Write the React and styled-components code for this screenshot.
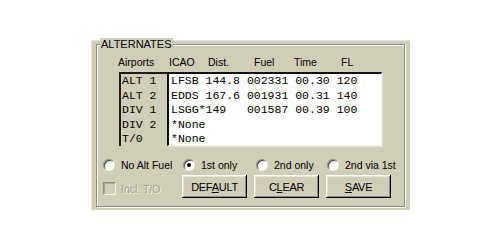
import React from 'react'
import styled, { createGlobalStyle } from 'styled-components'

const FACE = '#d0cdb9'
const SHADOW = '#8e8b7c'

const GlobalStyle = createGlobalStyle`
  html, body {
    margin: 0;
    background: #fff;
  }
  body {
    font-family: "Liberation Sans", Arial, sans-serif;
  }
`

const Page = styled.div`
  padding: 40px 0 0 91px;
`

const Panel = styled.div`
  width: 319px;
  height: 170px;
  box-sizing: border-box;
  padding: 4px 5px 3px 5px;
  background: ${FACE};
  box-shadow: inset 1px 1px 0 #e4e2d4;
`

const GroupBox = styled.div`
  position: relative;
  height: 100%;
  box-sizing: border-box;
  border: 1px solid ${SHADOW};
  box-shadow: inset 1px 1px 0 #fff, 1px 1px 0 #fff;
  padding: 10px 0 0 1px;
`

const Legend = styled.div`
  position: absolute;
  top: -7px;
  left: 3px;
  padding: 0 1px;
  background: ${FACE};
  font-size: 11px;
  line-height: 13px;
  color: #000;
`

const HeaderRow = styled.div`
  display: flex;
  padding-left: 20px;
  height: 14px;
  font-size: 10.5px;
  line-height: 14px;
  color: #000;
`

const HeadCell = styled.div`
  width: ${p => p.$w}px;
  flex: none;
`

const Table = styled.div`
  display: flex;
  margin: 3px 0 0 21px;
  height: 74px;
  font-family: "Liberation Mono", "Courier New", monospace;
  font-size: 11.5px;
  color: #000;
`

const LabelBox = styled.div`
  width: 48px;
  box-sizing: border-box;
  border-top: 2px solid #1c1c1c;
  border-left: 2px solid #1c1c1c;
  padding-left: 1px;
  background: ${FACE};
`

const ListBox = styled.div`
  width: 215px;
  box-sizing: border-box;
  border-top: 2px solid #111;
  border-left: 2px solid #111;
  border-right: 1px solid #f4f3ec;
  border-bottom: 1px solid #f4f3ec;
  box-shadow: 1px 1px 0 #e2e0d2;
  padding-left: 2px;
  background: #fff;
`

const Row = styled.div`
  height: 14.5px;
  line-height: 14.5px;
  white-space: pre;
`

const RadioRow = styled.div`
  display: grid;
  grid-template-columns: 80px 73px 71px auto;
  margin: 12px 0 0 5px;
  height: 14px;
  font-size: 10.5px;
  color: #000;
`

const RadioItem = styled.label`
  display: flex;
  align-items: center;
  gap: 6px;
`

const RadioCircle = styled.span`
  position: relative;
  width: 12px;
  height: 12px;
  box-sizing: border-box;
  border-radius: 50%;
  background: #fff;
  border: 1px solid;
  border-color: ${SHADOW} #f4f3ec #f4f3ec ${SHADOW};
  box-shadow: inset 1px 1px 0 #404040;
  flex: none;

  &::after {
    content: '';
    display: ${p => (p.$on ? 'block' : 'none')};
    position: absolute;
    left: 3px;
    top: 3px;
    width: 4px;
    height: 4px;
    border-radius: 50%;
    background: #000;
  }
`

const BottomRow = styled.div`
  display: flex;
  align-items: center;
  margin: 3px 0 0 5px;
  height: 23px;
`

const CheckGroup = styled.div`
  width: 79px;
  flex: none;
  display: flex;
  align-items: center;
  gap: 5px;
  font-size: 10.5px;
  color: #a3a091;
  text-shadow: 1px 1px 0 #f2f1e8;
  margin-top: 4px;
`

const CheckBox = styled.span`
  width: 13px;
  height: 13px;
  box-sizing: border-box;
  border: 1px solid;
  border-color: ${SHADOW} #f4f3ec #f4f3ec ${SHADOW};
  box-shadow: inset 1px 1px 0 #a9a696;
  background: ${FACE};
  flex: none;
`

const Buttons = styled.div`
  display: flex;
  gap: 7px;
`

const Button = styled.button`
  width: 65px;
  height: 23px;
  padding: 0;
  background: ${FACE};
  border: none;
  box-shadow:
    inset -1px -1px 0 #000,
    inset 1px 1px 0 #fff,
    inset -2px -2px 0 ${SHADOW},
    inset 2px 2px 0 #e6e4d8;
  font-family: "Liberation Sans", Arial, sans-serif;
  font-size: 11px;
  letter-spacing: -0.3px;
  color: #000;

  u {
    text-underline-offset: 1px;
  }
`

const headers = [
  ['Airports', 51],
  ['ICAO', 39],
  ['Dist.', 46],
  ['Fuel', 40],
  ['Time', 47],
  ['FL', 20],
]

const labels = ['ALT 1', 'ALT 2', 'DIV 1', 'DIV 2', 'T/0']

const entries = [
  'LFSB 144.8 002331 00.30 120',
  'EDDS 167.6 001931 00.31 140',
  'LSGG*149   001587 00.39 100',
  '*None',
  '*None',
]

const radios = [
  ['No Alt Fuel', false],
  ['1st only', true],
  ['2nd only', false],
  ['2nd via 1st', false],
]

export default function App() {
  return (
    <Page>
      <GlobalStyle />
      <Panel>
        <GroupBox>
          <Legend>ALTERNATES</Legend>
          <HeaderRow>
            {headers.map(([t, w]) => (
              <HeadCell key={t} $w={w}>{t}</HeadCell>
            ))}
          </HeaderRow>
          <Table>
            <LabelBox>
              {labels.map(l => <Row key={l}>{l}</Row>)}
            </LabelBox>
            <ListBox>
              {entries.map((e, i) => <Row key={i}>{e}</Row>)}
            </ListBox>
          </Table>
          <RadioRow>
            {radios.map(([t, on]) => (
              <RadioItem key={t}>
                <RadioCircle $on={on} />
                {t}
              </RadioItem>
            ))}
          </RadioRow>
          <BottomRow>
            <CheckGroup>
              <CheckBox />
              Incl. T/O
            </CheckGroup>
            <Buttons>
              <Button>DEF<u>A</u>ULT</Button>
              <Button>C<u>L</u>EAR</Button>
              <Button><u>S</u>AVE</Button>
            </Buttons>
          </BottomRow>
        </GroupBox>
      </Panel>
    </Page>
  )
}
